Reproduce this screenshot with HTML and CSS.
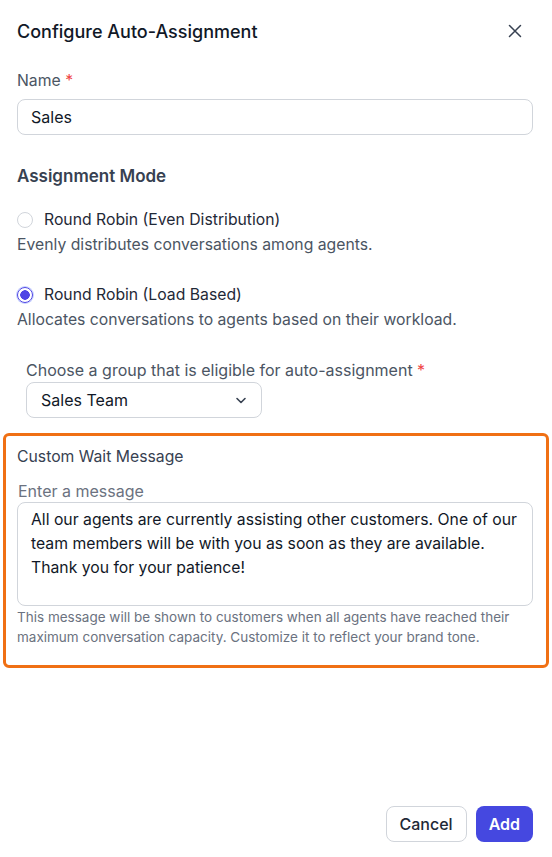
FILE: index.html
```html
<!DOCTYPE html>
<html lang="en">

<head>
  <meta charset="UTF-8">
  <title>Configure Auto-Assignment</title>
  <link rel="stylesheet" href="styles.css">
</head>

<body>
  <div class="dialog">
    <div class="dialog-header">
      <h1>Configure Auto-Assignment</h1>
      <button class="close-btn" aria-label="Close">
        <svg width="14" height="14" viewBox="0 0 14 14" fill="none" stroke="#374151" stroke-width="1.5" stroke-linecap="round">
          <path d="M1.5 1.5l11 11M12.5 1.5l-11 11" />
        </svg>
      </button>
    </div>

    <div class="field">
      <label class="label">Name <span class="req">*</span></label>
      <input class="text-input" value="Sales" />
    </div>

    <h2>Assignment Mode</h2>

    <div class="mode">
      <label class="radio-row">
        <span class="radio"></span>
        Round Robin (Even Distribution)
      </label>
      <p class="mode-desc">Evenly distributes conversations among agents.</p>
    </div>

    <div class="mode">
      <label class="radio-row">
        <span class="radio checked"></span>
        Round Robin (Load Based)
      </label>
      <p class="mode-desc">Allocates conversations to agents based on their workload.</p>
    </div>

    <div class="group-field">
      <label class="label group-label">Choose a group that is eligible for auto-assignment <span class="req">*</span></label>
      <div class="select">
        <span>Sales Team</span>
        <svg width="14" height="14" viewBox="0 0 14 14" fill="none" stroke="#374151" stroke-width="1.6" stroke-linecap="round" stroke-linejoin="round">
          <path d="M3 5.5l4 4 4-4" />
        </svg>
      </div>
    </div>

    <div class="wait-box">
      <div class="wait-title">Custom Wait Message</div>
      <label class="wait-label">Enter a message</label>
      <div class="textarea">All our agents are currently assisting other customers. One of our team members will be with you as soon as they are available. Thank you for your patience!</div>
      <p class="help">This message will be shown to customers when all agents have reached their maximum conversation capacity. Customize it to reflect your brand tone.</p>
    </div>

    <div class="footer">
      <button class="btn btn-cancel">Cancel</button>
      <button class="btn btn-add">Add</button>
    </div>
  </div>
</body>

</html>
```

FILE: styles.css
```css
* {
  box-sizing: border-box;
}

body {
  margin: 0;
  font-family: Inter, "Noto Sans", sans-serif;
  background-color: #fff;
  color: #111827;
}

.dialog {
  width: 552px;
  height: 857px;
  padding: 0 19px 0 17px;
  display: flex;
  flex-direction: column;
}

.dialog-header {
  display: flex;
  align-items: center;
  justify-content: space-between;
  height: 62px;
}

h1 {
  margin: 0;
  font-size: 18px;
  font-weight: 500;
  color: #111827;
}

.close-btn {
  background: none;
  border: none;
  padding: 0;
  width: 20px;
  height: 20px;
  display: flex;
  align-items: center;
  justify-content: center;
  margin-right: 8px;
}

.field {
  margin-top: 9px;
}

.label {
  display: block;
  font-size: 15.75px;
  color: #4b5563;
  line-height: 20px;
}

.req {
  color: #ef4444;
}

.text-input {
  display: block;
  width: 100%;
  height: 36px;
  margin-top: 8px;
  padding: 0 13px;
  border: 1px solid #d1d5db;
  border-radius: 8px;
  font-family: inherit;
  font-size: 16px;
  color: #111827;
}

h2 {
  margin: 30px 0 0;
  font-size: 17px;
  font-weight: 600;
  color: #374151;
  line-height: 22px;
}

.mode {
  margin-top: 23px;
}

.mode + .mode {
  margin-top: 30px;
}

.radio-row {
  display: flex;
  align-items: center;
  gap: 11px;
  font-size: 15.75px;
  color: #1f2937;
  line-height: 20px;
}

.radio {
  width: 16px;
  height: 16px;
  border-radius: 50%;
  border: 1px solid #d1d5db;
  flex-shrink: 0;
}

.radio.checked {
  border: 1px solid #4f46e5;
  background: radial-gradient(circle, #4f46e5 0 4.5px, #fff 5px);
  box-shadow: 0 0 0 1px #c7d2fe;
}

.mode-desc {
  margin: 5px 0 0;
  font-size: 15.75px;
  color: #4b5563;
  line-height: 20px;
}

.group-field {
  margin-top: 30px;
  padding-left: 9px;
}

.group-label {
  font-size: 16px;
}

.select {
  margin-top: 2px;
  width: 236px;
  height: 36px;
  border: 1px solid #d1d5db;
  border-radius: 8px;
  display: flex;
  align-items: center;
  justify-content: space-between;
  padding: 0 13px 0 14px;
  font-size: 16px;
  color: #111827;
}

.wait-box {
  margin: 15px -16px 0 -14px;
  border: 3px solid #f07014;
  border-radius: 6px;
  padding: 11px 13px 18px 11px;
}

.wait-title {
  font-size: 15.75px;
  color: #374151;
  line-height: 20px;
}

.wait-label {
  display: block;
  margin-top: 14px;
  padding-left: 1px;
  font-size: 16px;
  color: #6b7280;
  line-height: 20px;
}

.textarea {
  margin-top: 1px;
  height: 104px;
  border: 1px solid #d1d5db;
  border-radius: 8px;
  padding: 5px 13px;
  font-size: 15.75px;
  line-height: 24px;
  color: #111827;
}

.help {
  margin: 1px 0 0;
  font-size: 13.5px;
  line-height: 20px;
  color: #6b7280;
}

.footer {
  margin-top: auto;
  margin-bottom: 15px;
  display: flex;
  justify-content: flex-end;
  gap: 9px;
}

.btn {
  height: 36px;
  padding: 0 13px;
  border-radius: 8px;
  font-family: inherit;
  font-size: 16px;
  font-weight: 500;
  cursor: pointer;
}

.btn-cancel {
  background-color: #fff;
  border: 1px solid #d1d5db;
  color: #1f2937;
}

.btn-add {
  background-color: #4548e0;
  border: none;
  color: #fff;
  font-weight: 600;
}
```
